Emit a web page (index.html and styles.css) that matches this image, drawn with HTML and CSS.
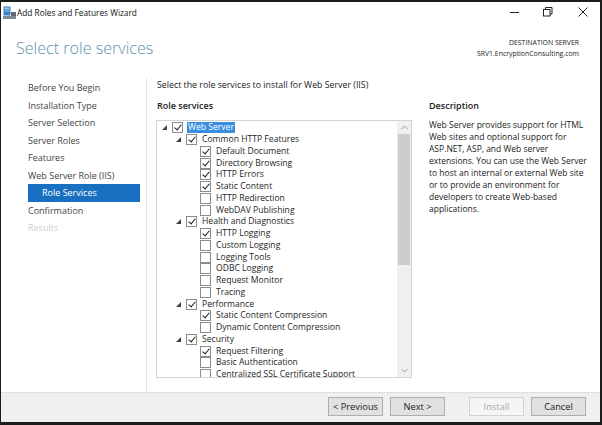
FILE: index.html
```html
<!DOCTYPE html>
<html>
<head>
<meta charset="utf-8">
<link rel="stylesheet" href="styles.css">
</head>
<body>
<div class="window">
  <div class="titlebar">
    <svg class="appicon" width="13" height="13" viewBox="0 0 13 13">
      <rect x="0.5" y="0.5" width="7" height="9" fill="#3b7fc4"/>
      <rect x="1.5" y="1.5" width="5" height="2" fill="#9cc8ef"/>
      <rect x="1.5" y="4.5" width="5" height="1" fill="#9cc8ef"/>
      <rect x="0" y="10" width="13" height="3" fill="#7d8a96"/>
      <rect x="8" y="6" width="5" height="4" fill="#5d6b78"/>
    </svg>
    <span class="title">Add Roles and Features Wizard</span>
    <div class="controls">
      <svg width="10" height="10" viewBox="0 0 10 10"><line x1="0" y1="5.5" x2="9" y2="5.5" stroke="#222" stroke-width="1"/></svg>
      <svg width="10" height="10" viewBox="0 0 10 10"><rect x="0.5" y="2.5" width="6.5" height="6.5" fill="none" stroke="#222"/><polyline points="2.5,2.5 2.5,0.5 9,0.5 9,7 7,7" fill="none" stroke="#222"/></svg>
      <svg width="10" height="10" viewBox="0 0 10 10"><line x1="0.5" y1="0.5" x2="9.5" y2="9.5" stroke="#222"/><line x1="9.5" y1="0.5" x2="0.5" y2="9.5" stroke="#222"/></svg>
    </div>
  </div>
  <div class="header">
    <h1 class="page-title">Select role services</h1>
    <div class="dest">
      <div>DESTINATION SERVER</div>
      <div>SRV1.EncryptionConsulting.com</div>
    </div>
  </div>
  <div class="main">
    <nav class="nav">
      <div class="nav-item">Before You Begin</div>
      <div class="nav-item">Installation Type</div>
      <div class="nav-item">Server Selection</div>
      <div class="nav-item">Server Roles</div>
      <div class="nav-item">Features</div>
      <div class="nav-item">Web Server Role (IIS)</div>
      <div class="nav-item active">Role Services</div>
      <div class="nav-item">Confirmation</div>
      <div class="nav-item disabled">Results</div>
    </nav>
    <div class="content">
      <div class="instruction">Select the role services to install for Web Server (IIS)</div>
      <div class="columns">
        <div class="left">
          <div class="heading">Role services</div>
          <div class="treebox">
            <div class="tree">
              <div class="row l0"><span class="exp"></span><span class="cb on"></span><span class="lbl sel">Web Server</span></div>
              <div class="row l1"><span class="exp"></span><span class="cb on"></span><span class="lbl">Common HTTP Features</span></div>
              <div class="row l2"><span class="cb on"></span><span class="lbl">Default Document</span></div>
              <div class="row l2"><span class="cb on"></span><span class="lbl">Directory Browsing</span></div>
              <div class="row l2"><span class="cb on"></span><span class="lbl">HTTP Errors</span></div>
              <div class="row l2"><span class="cb on"></span><span class="lbl">Static Content</span></div>
              <div class="row l2"><span class="cb"></span><span class="lbl">HTTP Redirection</span></div>
              <div class="row l2"><span class="cb"></span><span class="lbl">WebDAV Publishing</span></div>
              <div class="row l1"><span class="exp"></span><span class="cb on"></span><span class="lbl">Health and Diagnostics</span></div>
              <div class="row l2"><span class="cb on"></span><span class="lbl">HTTP Logging</span></div>
              <div class="row l2"><span class="cb"></span><span class="lbl">Custom Logging</span></div>
              <div class="row l2"><span class="cb"></span><span class="lbl">Logging Tools</span></div>
              <div class="row l2"><span class="cb"></span><span class="lbl">ODBC Logging</span></div>
              <div class="row l2"><span class="cb"></span><span class="lbl">Request Monitor</span></div>
              <div class="row l2"><span class="cb"></span><span class="lbl">Tracing</span></div>
              <div class="row l1"><span class="exp"></span><span class="cb on"></span><span class="lbl">Performance</span></div>
              <div class="row l2"><span class="cb on"></span><span class="lbl">Static Content Compression</span></div>
              <div class="row l2"><span class="cb"></span><span class="lbl">Dynamic Content Compression</span></div>
              <div class="row l1"><span class="exp"></span><span class="cb on"></span><span class="lbl">Security</span></div>
              <div class="row l2"><span class="cb on"></span><span class="lbl">Request Filtering</span></div>
              <div class="row l2"><span class="cb"></span><span class="lbl">Basic Authentication</span></div>
              <div class="row l2"><span class="cb"></span><span class="lbl">Centralized SSL Certificate Support</span></div>
            </div>
            <div class="scrollbar">
              <div class="sb-btn"><svg width="7" height="5" viewBox="0 0 7 5"><polyline points="0.5,4 3.5,1 6.5,4" fill="none" stroke="#9a9a9a"/></svg></div>
              <div class="sb-track"><div class="sb-thumb"></div></div>
              <div class="sb-btn"><svg width="7" height="5" viewBox="0 0 7 5"><polyline points="0.5,1 3.5,4 6.5,1" fill="none" stroke="#9a9a9a"/></svg></div>
            </div>
          </div>
        </div>
        <div class="right">
          <div class="heading">Description</div>
          <p class="desc">Web Server provides support for HTML<br>Web sites and optional support for<br>ASP.NET, ASP, and Web server<br>extensions. You can use the Web Server<br>to host an internal or external Web site<br>or to provide an environment for<br>developers to create Web-based<br>applications.</p>
        </div>
      </div>
    </div>
  </div>
  <div class="footer">
    <button class="btn">&lt; Previous</button>
    <button class="btn">Next &gt;</button>
    <button class="btn disabled gap">Install</button>
    <button class="btn">Cancel</button>
  </div>
</div>
</body>
</html>
```

FILE: styles.css
```css
* { box-sizing: border-box; }
html, body { margin: 0; padding: 0; }
body {
  background: #1c1c1c;
  width: 602px;
  height: 425px;
  overflow: hidden;
  font-family: "Open Sans", "Noto Sans", sans-serif;
  color: #1e1e1e;
}
.window {
  margin: 2px 0 0 1px;
  width: 599px;
  height: 420px;
  background: #fff;
  display: flex;
  flex-direction: column;
}
.titlebar {
  height: 20px;
  flex: none;
  display: flex;
  align-items: center;
  padding-left: 2px;
}
.appicon { margin-right: 1px; flex: none; }
.title { font-size: 8.3px; color: #111; }
.controls {
  margin-left: auto;
  display: flex;
  align-items: center;
  gap: 23px;
  padding-right: 12px;
}
.controls svg:last-child { margin-left: 2px; }
.header {
  height: 56px;
  flex: none;
  display: flex;
  justify-content: space-between;
  padding: 14px 21px 0 15px;
}
.page-title {
  margin: 0;
  font-weight: 300;
  font-size: 16.1px;
  line-height: 24px;
  color: #5b93ad;
}
.dest {
  text-align: right;
  font-size: 6.9px;
  line-height: 11px;
  color: #222;
  padding-top: 1px;
}
.main {
  flex: 1;
  display: flex;
  min-height: 0;
}
.nav {
  flex: none;
  width: 146px;
  border-right: 1px solid #e6e6e6;
  padding-top: 1px;
}
.nav-item {
  height: 17.5px;
  line-height: 17.5px;
  margin: 0 6px 0 27px;
  font-size: 9px;
  color: #444;
  white-space: nowrap;
}
.nav-item.active {
  background: #1a70c0;
  color: #fff;
  padding-left: 14px;
}
.nav-item.disabled { color: #cfcfcf; }
.content {
  flex: 1;
  min-width: 0;
  padding-left: 9px;
}
.instruction {
  font-size: 8.8px;
  line-height: 14px;
  padding-left: 1px;
  color: #222;
}
.columns {
  display: flex;
  gap: 16px;
  margin-top: 7px;
}
.heading {
  font-size: 9px;
  font-weight: 600;
  line-height: 14px;
  padding-left: 1px;
  color: #222;
}
.left { width: 256px; flex: none; }
.treebox {
  margin-top: 7px;
  height: 258px;
  border: 1px solid #d4d4d4;
  display: flex;
  overflow: hidden;
}
.tree {
  flex: 1;
  padding-top: 1px;
  overflow: hidden;
}
.row {
  height: 11.75px;
  display: flex;
  align-items: center;
  font-size: 8.6px;
  white-space: nowrap;
  color: #1e1e1e;
}
.row.l0 { padding-left: 3px; }
.row.l1 { padding-left: 17px; }
.row.l2 { padding-left: 43px; }
.exp {
  width: 12px;
  height: 11px;
  flex: none;
  position: relative;
}
.exp::after {
  content: "";
  position: absolute;
  left: 2px;
  top: 3px;
  width: 0;
  height: 0;
  border-style: solid;
  border-width: 0 0 5px 5px;
  border-color: transparent transparent #404040 transparent;
}
.cb {
  width: 11px;
  height: 11px;
  border: 1px solid #8c8c8c;
  background: #fff;
  flex: none;
  position: relative;
}
.cb.on::after {
  content: "";
  position: absolute;
  left: 3px;
  top: 0px;
  width: 3px;
  height: 6px;
  border-right: 1.6px solid #1a1a1a;
  border-bottom: 1.6px solid #1a1a1a;
  transform: rotate(40deg);
}
.lbl {
  margin-left: 4px;
  padding: 0 1px;
  line-height: 11px;
}
.lbl.sel {
  background: #3a8ee0;
  color: #fff;
}
.scrollbar {
  width: 14px;
  flex: none;
  background: #f0f0f0;
  display: flex;
  flex-direction: column;
}
.sb-btn {
  height: 13px;
  display: flex;
  align-items: center;
  justify-content: center;
}
.sb-track { flex: 1; }
.sb-thumb {
  margin: 0 1px;
  height: 131px;
  background: #cdcdcd;
}
.right { flex: 1; min-width: 0; }
.desc {
  margin: 6px 0 0;
  font-size: 8.5px;
  line-height: 12px;
  padding-left: 1px;
  color: #222;
  white-space: nowrap;
}
.footer {
  height: 30px;
  flex: none;
  background: #f0f0f0;
  border-top: 1px solid #dfdfdf;
  display: flex;
  align-items: center;
  justify-content: flex-end;
  gap: 7px;
  padding: 0 14px 2px 0;
}
.btn {
  width: 55px;
  height: 19px;
  background: #e1e1e1;
  border: 1px solid #adadad;
  font-family: "Open Sans", "Noto Sans", sans-serif;
  font-size: 9.3px;
  color: #222;
  padding: 0;
}
.btn.gap { margin-left: 17px; }
.btn.disabled {
  background: #f5f5f5;
  border-color: #d2d2d2;
  color: #a8a8a8;
}
```
